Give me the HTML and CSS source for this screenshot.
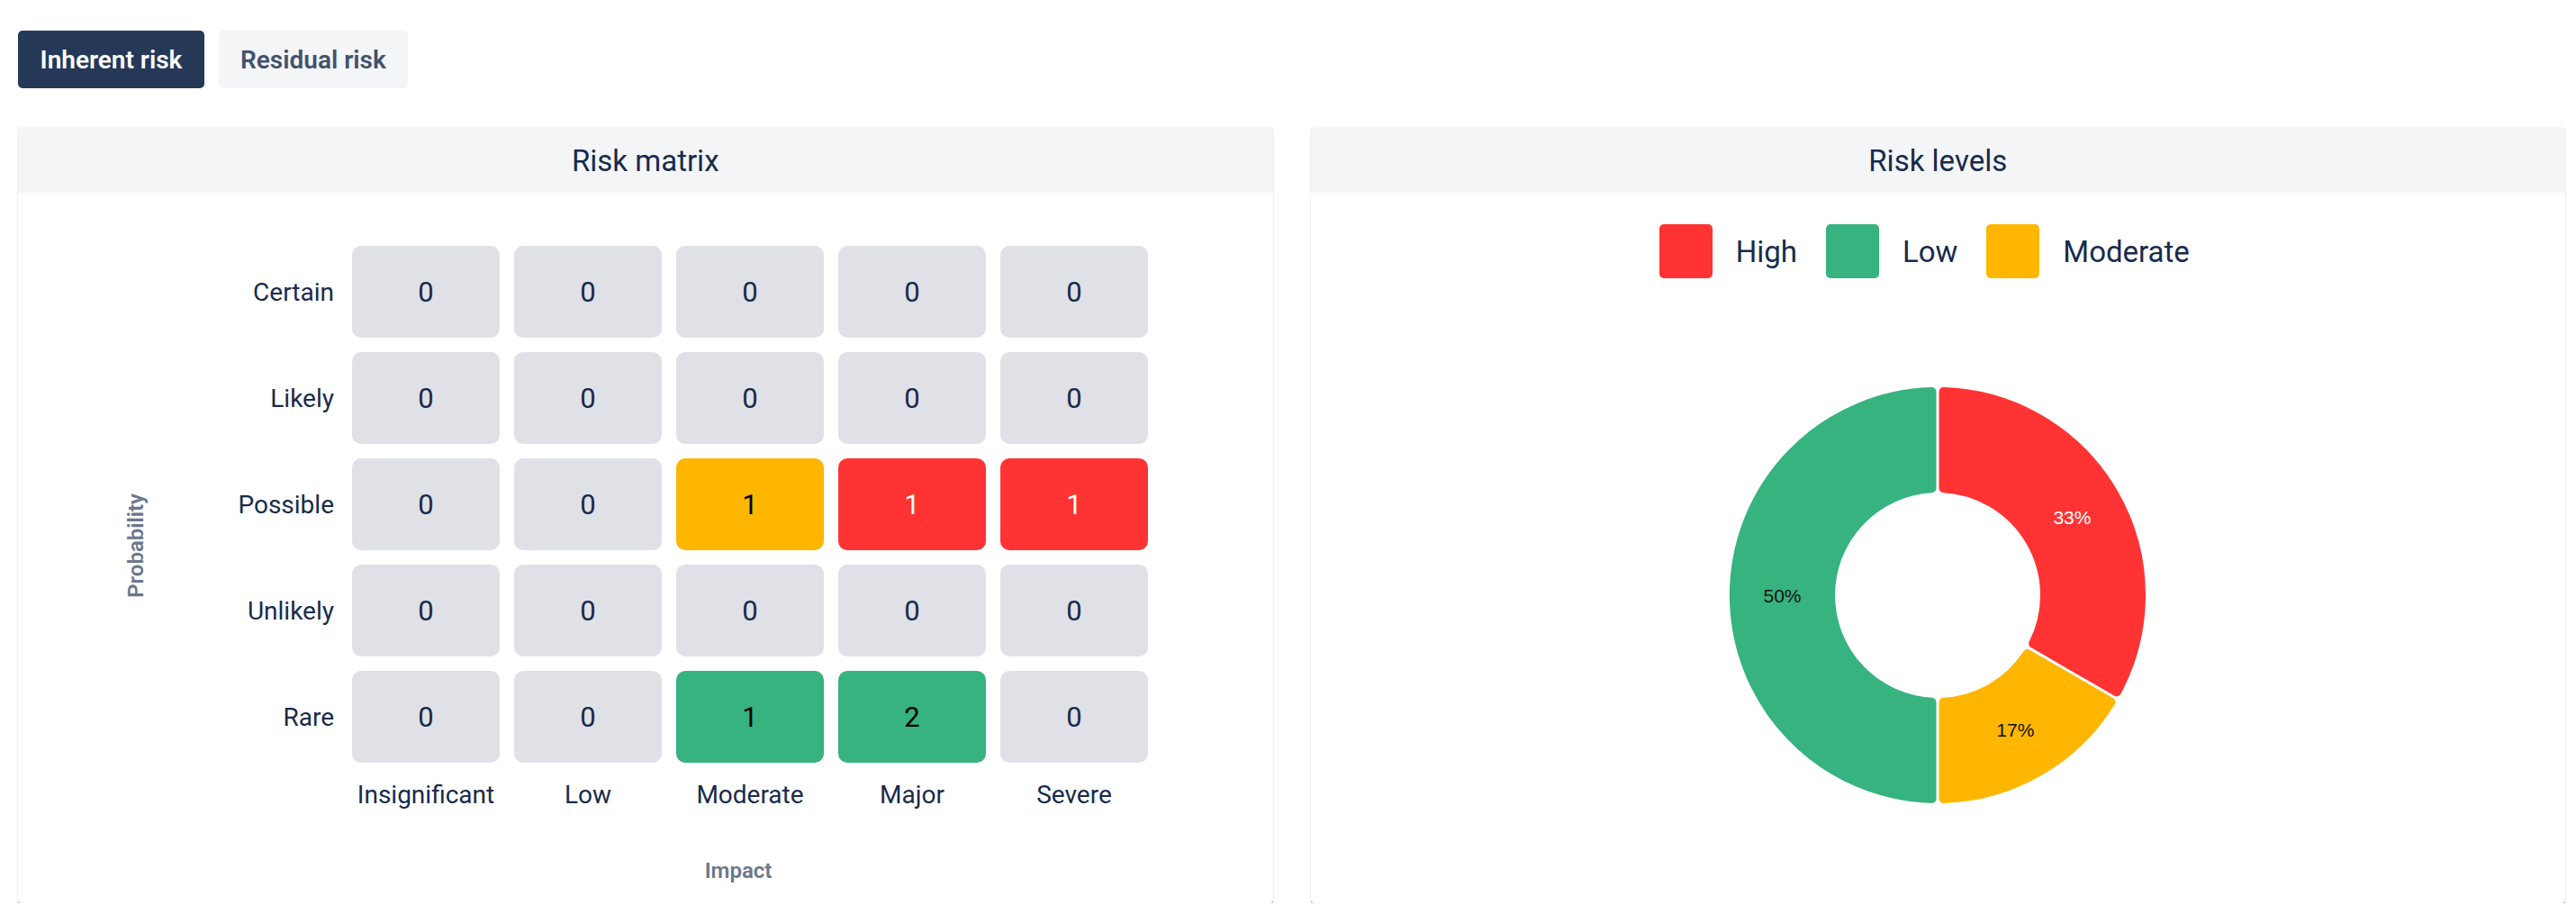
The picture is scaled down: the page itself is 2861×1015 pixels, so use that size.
FILE: index.html
```html
<!DOCTYPE html>
<html lang="en">
<head>
<meta charset="utf-8">
<title>Risk overview</title>
<link rel="stylesheet" href="styles.css">
</head>
<body>
<div class="page">
  <div class="tabs">
    <button class="tab tab-active">Inherent risk</button>
    <button class="tab">Residual risk</button>
  </div>

  <div class="panels">
    <section class="panel">
      <header class="panel-head">Risk matrix</header>
      <div class="matrix-body">
        <div class="y-axis"><span class="axis-label y-label">Probability</span></div>
        <div class="matrix">
          <div class="row-label">Certain</div>
          <div class="cell">0</div><div class="cell">0</div><div class="cell">0</div><div class="cell">0</div><div class="cell">0</div>

          <div class="row-label">Likely</div>
          <div class="cell">0</div><div class="cell">0</div><div class="cell">0</div><div class="cell">0</div><div class="cell">0</div>

          <div class="row-label">Possible</div>
          <div class="cell">0</div><div class="cell">0</div><div class="cell cell-moderate">1</div><div class="cell cell-high">1</div><div class="cell cell-high">1</div>

          <div class="row-label">Unlikely</div>
          <div class="cell">0</div><div class="cell">0</div><div class="cell">0</div><div class="cell">0</div><div class="cell">0</div>

          <div class="row-label">Rare</div>
          <div class="cell">0</div><div class="cell">0</div><div class="cell cell-low">1</div><div class="cell cell-low">2</div><div class="cell">0</div>

          <div class="corner"></div>
          <div class="col-label">Insignificant</div>
          <div class="col-label">Low</div>
          <div class="col-label">Moderate</div>
          <div class="col-label">Major</div>
          <div class="col-label">Severe</div>

          <div class="x-axis"><span class="axis-label">Impact</span></div>
        </div>
      </div>
    </section>

    <section class="panel">
      <header class="panel-head">Risk levels</header>
      <div class="levels-body">
        <div class="legend">
          <div class="legend-item"><span class="swatch swatch-high"></span><span class="legend-text">High</span></div>
          <div class="legend-item"><span class="swatch swatch-low"></span><span class="legend-text">Low</span></div>
          <div class="legend-item"><span class="swatch swatch-moderate"></span><span class="legend-text">Moderate</span></div>
        </div>
        <svg class="donut" width="470" height="470" viewBox="0 0 470 470">
          <path class="seg seg-high" d="M 241.50 9.09 A 226 226 0 0 1 433.89 342.33 L 341.15 288.78 A 119 119 0 0 0 241.50 116.18 Z"/>
          <path class="seg seg-moderate" d="M 427.39 353.58 A 226 226 0 0 1 241.50 460.91 L 241.50 353.82 A 119 119 0 0 0 334.65 300.04 Z"/>
          <path class="seg seg-low" d="M 228.50 460.91 A 226 226 0 0 1 228.50 9.09 L 228.50 116.18 A 119 119 0 0 0 228.50 353.82 Z"/>
          <text class="pct pct-light" x="384.4" y="148.8">33%</text>
          <text class="pct" x="321.3" y="384.4">17%</text>
          <text class="pct" x="62.5" y="235">50%</text>
        </svg>
      </div>
    </section>
  </div>
</div>
</body>
</html>
```

FILE: styles.css
```css
* {
  box-sizing: border-box;
}

body {
  margin: 0;
  background: #ffffff;
  color: #172b4d;
  font-family: Roboto, "Liberation Sans", sans-serif;
}

.page {
  padding: 34px 12px 0 20px;
}

/* Tabs */
.tabs {
  display: flex;
  gap: 16px;
}

.tab {
  height: 64px;
  min-width: 207px;
  padding: 0 24px;
  border: 0;
  border-radius: 5px;
  background: #f4f5f7;
  color: #42526e;
  font-family: Roboto, "Liberation Sans", sans-serif;
  font-size: 28px;
  font-weight: 600;
}

.tab-active {
  background: #253858;
  color: #ffffff;
}

/* Panels */
.panels {
  display: grid;
  grid-template-columns: 1fr 1fr;
  gap: 42px;
  margin-top: 44px;
}

.panel {
  background: #ffffff;
  border-radius: 4px;
  overflow: hidden;
  box-shadow: 0 2px 1px rgba(9, 30, 66, 0.28), 0 0 1px rgba(9, 30, 66, 0.4);
}

.panel-head {
  height: 72px;
  display: flex;
  align-items: center;
  justify-content: center;
  background: #f4f5f7;
  color: #172b4d;
  font-size: 33px;
  font-weight: 400;
}

/* Matrix */
.matrix-body {
  display: flex;
  padding: 59px 0 22px 119px;
}

.y-axis {
  width: 24px;
  display: flex;
  align-items: center;
  justify-content: center;
  padding-bottom: 42px;
}

.axis-label {
  color: #6b778c;
  font-size: 24px;
  font-weight: 600;
  line-height: 28px;
}

.y-label {
  writing-mode: vertical-rl;
  transform: rotate(180deg);
  line-height: 24px;
}

.matrix {
  display: grid;
  grid-template-columns: 212px repeat(5, 164px);
  grid-template-rows: repeat(5, 102px) 37px auto;
  column-gap: 16px;
  row-gap: 16px;
}

.row-label {
  display: flex;
  align-items: center;
  justify-content: flex-end;
  padding-right: 4px;
  font-size: 28px;
  color: #172b4d;
}

.cell {
  display: flex;
  align-items: center;
  justify-content: center;
  border-radius: 10px;
  background: #dfe1e6;
  color: #172b4d;
  font-size: 31px;
}

.cell-moderate {
  background: #ffb600;
  color: #000000;
}

.cell-high {
  background: #ff3333;
  color: #ffffff;
}

.cell-low {
  background: #36b37e;
  color: #000000;
}

.col-label {
  padding-top: 3px;
  text-align: center;
  font-size: 28px;
  line-height: 34px;
  color: #172b4d;
}

.x-axis {
  grid-column: 2 / -1;
  margin-top: 37px;
  padding-right: 26px;
  text-align: center;
}

/* Risk levels */
.levels-body {
  display: flex;
  flex-direction: column;
  align-items: center;
  padding-top: 35px;
}

.legend {
  display: flex;
  justify-content: center;
  gap: 32px;
  padding-right: 30px;
}

.legend-item {
  display: flex;
  align-items: center;
  gap: 26px;
}

.swatch {
  width: 59px;
  height: 60px;
  border-radius: 5px;
}

.swatch-high {
  background: #ff3333;
}

.swatch-low {
  background: #36b37e;
}

.swatch-moderate {
  background: #ffb600;
}

.legend-text {
  font-size: 33px;
  color: #172b4d;
}

.donut {
  display: block;
  margin-top: 117px;
}

.seg {
  stroke-width: 10;
  stroke-linejoin: round;
}

.seg-high {
  fill: #ff3333;
  stroke: #ff3333;
}

.seg-moderate {
  fill: #ffb600;
  stroke: #ffb600;
}

.seg-low {
  fill: #36b37e;
  stroke: #36b37e;
}

.pct {
  font-family: "Liberation Sans", Arial, sans-serif;
  font-size: 21px;
  fill: #111111;
  text-anchor: middle;
  dominant-baseline: central;
}

.pct-light {
  fill: #ffffff;
}
```
